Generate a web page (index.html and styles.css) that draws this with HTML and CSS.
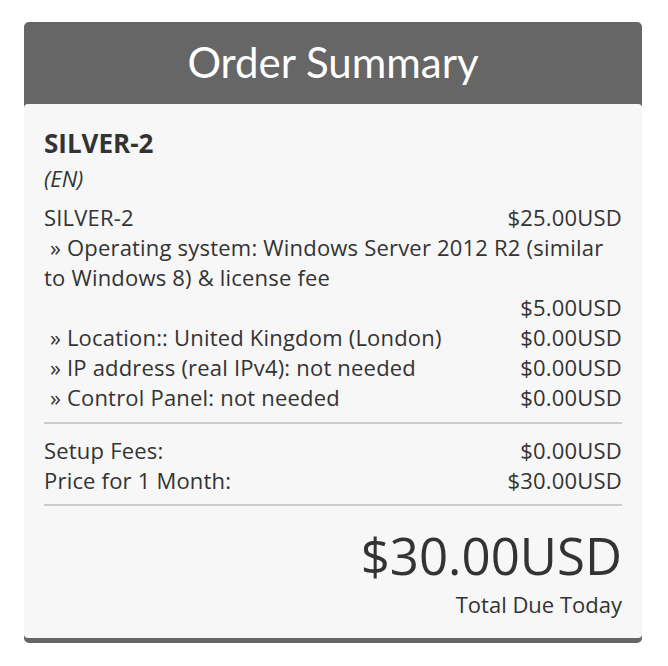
FILE: index.html
```html
<!DOCTYPE html>
<html>
<head>
<meta charset="utf-8">
<link rel="stylesheet" href="styles.css">
</head>
<body>
<div class="summary">
  <h2 class="summary-title">Order Summary</h2>
  <div class="summary-body">
    <div class="product-name">SILVER-2</div>
    <div class="product-group">(EN)</div>
    <div class="items first">
      <div class="row"><span>SILVER-2</span><span>$25.00USD</span></div>
      <div class="row wrap"><span>&nbsp;» Operating system: Windows Server 2012 R2 (similar to Windows 8) &amp; license fee</span></div>
      <div class="row end"><span>$5.00USD</span></div>
      <div class="row"><span>&nbsp;» Location:: United Kingdom (London)</span><span>$0.00USD</span></div>
      <div class="row"><span>&nbsp;» IP address (real IPv4): not needed</span><span>$0.00USD</span></div>
      <div class="row"><span>&nbsp;» Control Panel: not needed</span><span>$0.00USD</span></div>
    </div>
    <div class="divider"></div>
    <div class="items">
      <div class="row"><span>Setup Fees:</span><span>$0.00USD</span></div>
      <div class="row"><span>Price for 1 Month:</span><span>$30.00USD</span></div>
    </div>
    <div class="divider second"></div>
    <div class="total">
      <div class="total-amount">$30.00USD</div>
      <div class="total-label">Total Due Today</div>
    </div>
  </div>
</div>
</body>
</html>
```
FILE: styles.css
```css
html, body {
  margin: 0;
  padding: 0;
  background: #ffffff;
}
body {
  padding: 22px 26px 0 24px;
  font-family: "Open Sans", "Liberation Sans", sans-serif;
  color: #333333;
}
.summary {
  background: #666666;
  border-radius: 5px;
  padding-bottom: 5px;
}
.summary-title {
  margin: 0;
  height: 82px;
  line-height: 80px;
  text-align: center;
  color: #ffffff;
  font-family: "Lato", "Open Sans", sans-serif;
  font-weight: 400;
  font-size: 42px;
}
.summary-body {
  background: #f7f7f7;
  border-radius: 4px;
  padding: 20px 20px 19px 20px;
}
.product-name {
  font-weight: 700;
  font-size: 26px;
  line-height: 38px;
}
.product-group {
  font-style: italic;
  font-size: 22px;
  line-height: 32px;
}
.items {
  font-size: 22px;
  line-height: 30px;
  letter-spacing: 0.2px;
  margin-top: 11px;
}
.items.first {
  margin-top: 8px;
}
.row {
  display: flex;
  justify-content: space-between;
}
.row.end {
  justify-content: flex-end;
}
.divider {
  height: 2px;
  background: #cccccc;
  margin-top: 10px;
}
.divider.second {
  margin-top: 9px;
}
.total {
  text-align: right;
}
.total-amount {
  font-size: 51px;
  line-height: 60px;
  margin-top: 19px;
}
.total-label {
  font-size: 22px;
  line-height: 30px;
  margin-top: 4px;
}
```
